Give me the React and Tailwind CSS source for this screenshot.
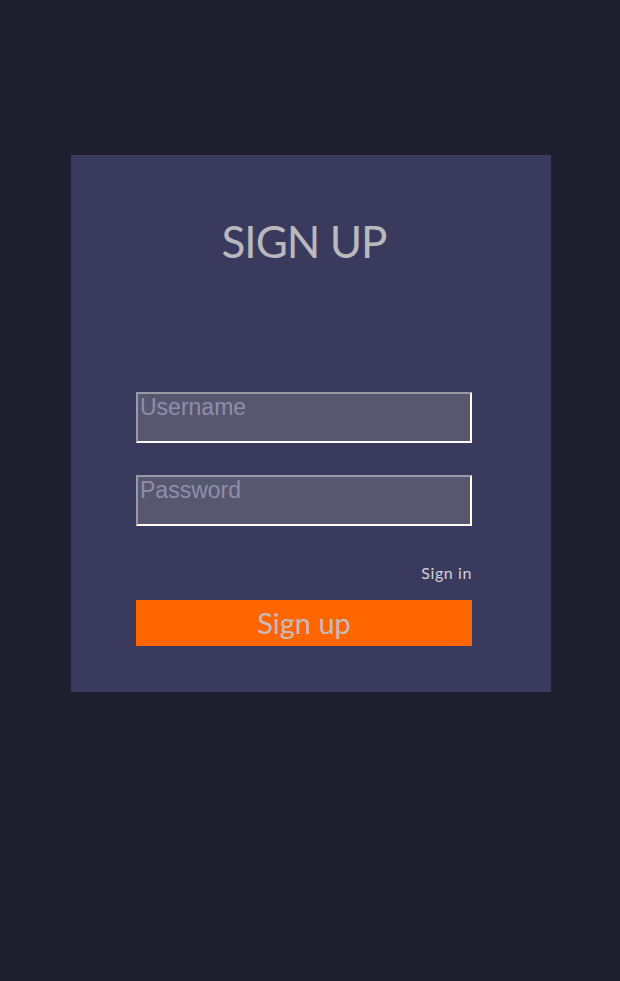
export default function App() {
  return (
    <div className="min-h-screen w-full bg-[#1e1e2f] pt-[155px]" style={{ fontFamily: "Lato, 'Open Sans', sans-serif" }}>
      <div className="ml-[71px] w-[480px] h-[537px] bg-[#3a3a5f] pl-[65px]">
        <div className="w-[336px]">
          <h1 className="pt-[56px] text-center text-[44px] leading-[60px] text-[#b9b9bd] tracking-[-1px]">
            SIGN UP
          </h1>
          <form className="mt-[121px] flex flex-col" onSubmit={(e) => e.preventDefault()}>
            <input
              type="text"
              placeholder="Username"
              className="h-[51px] w-full border-2 border-t-[#9a9aa6] border-l-[#9a9aa6] border-b-white border-r-white bg-[#575770] px-[2px] pt-0 pb-[20px] text-[23px] text-[#c8c8d6] placeholder:text-[#8e8eab] outline-none"
              style={{ fontFamily: "'Liberation Sans', Arial, sans-serif" }}
            />
            <input
              type="password"
              placeholder="Password"
              className="mt-[32px] h-[51px] w-full border-2 border-t-[#9a9aa6] border-l-[#9a9aa6] border-b-white border-r-white bg-[#575770] px-[2px] pt-0 pb-[20px] text-[23px] text-[#c8c8d6] placeholder:text-[#8e8eab] outline-none"
              style={{ fontFamily: "'Liberation Sans', Arial, sans-serif" }}
            />
            <div className="mt-[37px] flex justify-end">
              <a href="#" className="text-[16px] leading-[20px] text-[#d2d2da] tracking-[0.6px]">Sign in</a>
            </div>
            <button type="submit" className="mt-[17px] h-[46px] w-full bg-[#ff6600] text-[29px] leading-[46px] text-[#c4bcc0]">
              Sign up
            </button>
          </form>
        </div>
      </div>
    </div>
  );
}
